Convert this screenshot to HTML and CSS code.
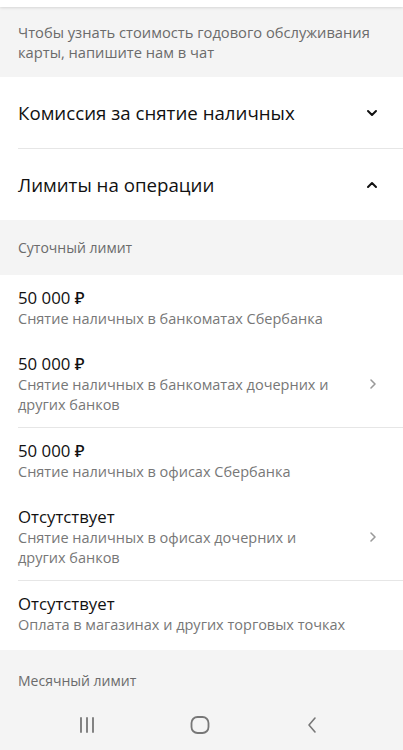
FILE: index.html
```html
<!DOCTYPE html>
<html lang="ru">
  <head>
    <meta charset="UTF-8" />
    <title>Лимиты карты</title>
    <link rel="stylesheet" href="styles.css">
  </head>
  <body>
    <div class="top-strip"></div>

    <div class="note">
      Чтобы узнать стоимость годового обслуживания карты, напишите нам в чат
    </div>

    <div class="accordion">
      <div class="acc-row">
        <span>Комиссия за снятие наличных</span>
        <svg class="acc-icon" width="14" height="14" viewBox="0 0 14 14">
          <path d="M3 5l4 4 4-4" stroke="#111" stroke-width="2" fill="none" stroke-linecap="round" stroke-linejoin="round" />
        </svg>
      </div>
      <div class="acc-row">
        <span>Лимиты на операции</span>
        <svg class="acc-icon" width="14" height="14" viewBox="0 0 14 14">
          <path d="M3 9l4-4 4 4" stroke="#111" stroke-width="2" fill="none" stroke-linecap="round" stroke-linejoin="round" />
        </svg>
      </div>
    </div>

    <div class="group-label">Суточный лимит</div>

    <div class="limits">
      <div class="limit">
        <div class="limit-text">
          <div class="limit-value">50 000 ₽</div>
          <div class="limit-desc">Снятие наличных в банкоматах Сбербанка</div>
        </div>
      </div>
      <div class="limit has-more">
        <div class="limit-text">
          <div class="limit-value">50 000 ₽</div>
          <div class="limit-desc">Снятие наличных в банкоматах дочерних и других банков</div>
        </div>
        <svg class="more" width="12" height="14" viewBox="0 0 12 14">
          <path d="M4 3l4 4-4 4" stroke="#9a9a9a" stroke-width="1.6" fill="none" stroke-linecap="round" stroke-linejoin="round" />
        </svg>
      </div>
      <div class="limit">
        <div class="limit-text">
          <div class="limit-value">50 000 ₽</div>
          <div class="limit-desc">Снятие наличных в офисах Сбербанка</div>
        </div>
      </div>
      <div class="limit has-more">
        <div class="limit-text">
          <div class="limit-value">Отсутствует</div>
          <div class="limit-desc">Снятие наличных в офисах дочерних и других банков</div>
        </div>
        <svg class="more" width="12" height="14" viewBox="0 0 12 14">
          <path d="M4 3l4 4-4 4" stroke="#9a9a9a" stroke-width="1.6" fill="none" stroke-linecap="round" stroke-linejoin="round" />
        </svg>
      </div>
      <div class="limit">
        <div class="limit-text">
          <div class="limit-value">Отсутствует</div>
          <div class="limit-desc">Оплата в магазинах и других торговых точках</div>
        </div>
      </div>
    </div>

    <div class="group-label month">Месячный лимит</div>

    <nav class="navbar">
      <svg width="20" height="18" viewBox="0 0 20 18">
        <path d="M4 2v14M10 2v14M16 2v14" stroke="#777" stroke-width="1.8" stroke-linecap="round" />
      </svg>
      <svg width="22" height="20" viewBox="0 0 22 20">
        <rect x="2.5" y="2" width="17" height="16" rx="6" stroke="#777" stroke-width="1.8" fill="none" />
      </svg>
      <svg width="20" height="20" viewBox="0 0 20 20">
        <path d="M13 3l-6 7 6 7" stroke="#777" stroke-width="1.6" fill="none" stroke-linecap="round" stroke-linejoin="round" />
      </svg>
    </nav>
  </body>
</html>
```

FILE: styles.css
```css
body {
  margin: 0;
  font-family: "Open Sans", "Noto Sans", Arial, sans-serif;
  background: #f4f4f4;
  color: #111;
  width: 403px;
  height: 750px;
  overflow: hidden;
}

.top-strip {
  height: 7px;
  background: #fff;
  box-shadow: 0 1px 3px rgba(0, 0, 0, 0.12);
  position: relative;
}

.note {
  padding: 15px 20px 15px 18px;
  font-size: 14.7px;
  line-height: 20px;
  color: #6b6b6b;
  background: #f4f4f4;
}

.accordion {
  background: #fff;
}

.acc-row {
  display: flex;
  align-items: center;
  justify-content: space-between;
  height: 71px;
  margin-left: 18px;
  padding-right: 24px;
  font-size: 18.7px;
  color: #111;
}

.acc-row + .acc-row {
  border-top: 1px solid #e6e6e6;
}

.acc-icon {
  flex: none;
}

.group-label {
  height: 55px;
  display: flex;
  align-items: center;
  padding-left: 18px;
  font-size: 14px;
  color: #6b6b6b;
  background: #f4f4f4;
}

.group-label.month {
  height: 50px;
  padding-top: 10px;
  box-sizing: border-box;
}

.limits {
  background: #fff;
  padding-bottom: 3px;
}

.limit {
  display: flex;
  align-items: center;
  margin-left: 18px;
  padding: 12px 16px 12px 0;
}

.limit.has-more {
  border-bottom: 1px solid #e6e6e6;
  padding-right: 24px;
}

.limit-text {
  flex: 1;
}

.limit-value {
  font-size: 16.8px;
  font-weight: 500;
  line-height: 22px;
  color: #111;
}

.limit-desc {
  font-size: 14.5px;
  line-height: 20px;
  color: #777;
}

.has-more .limit-desc {
  max-width: 312px;
}

.more {
  flex: none;
  margin-left: 12px;
}

.navbar {
  height: 50px;
  display: flex;
  align-items: center;
  justify-content: space-between;
  padding: 0 81px 0 77px;
  background: #f4f4f4;
}
```
